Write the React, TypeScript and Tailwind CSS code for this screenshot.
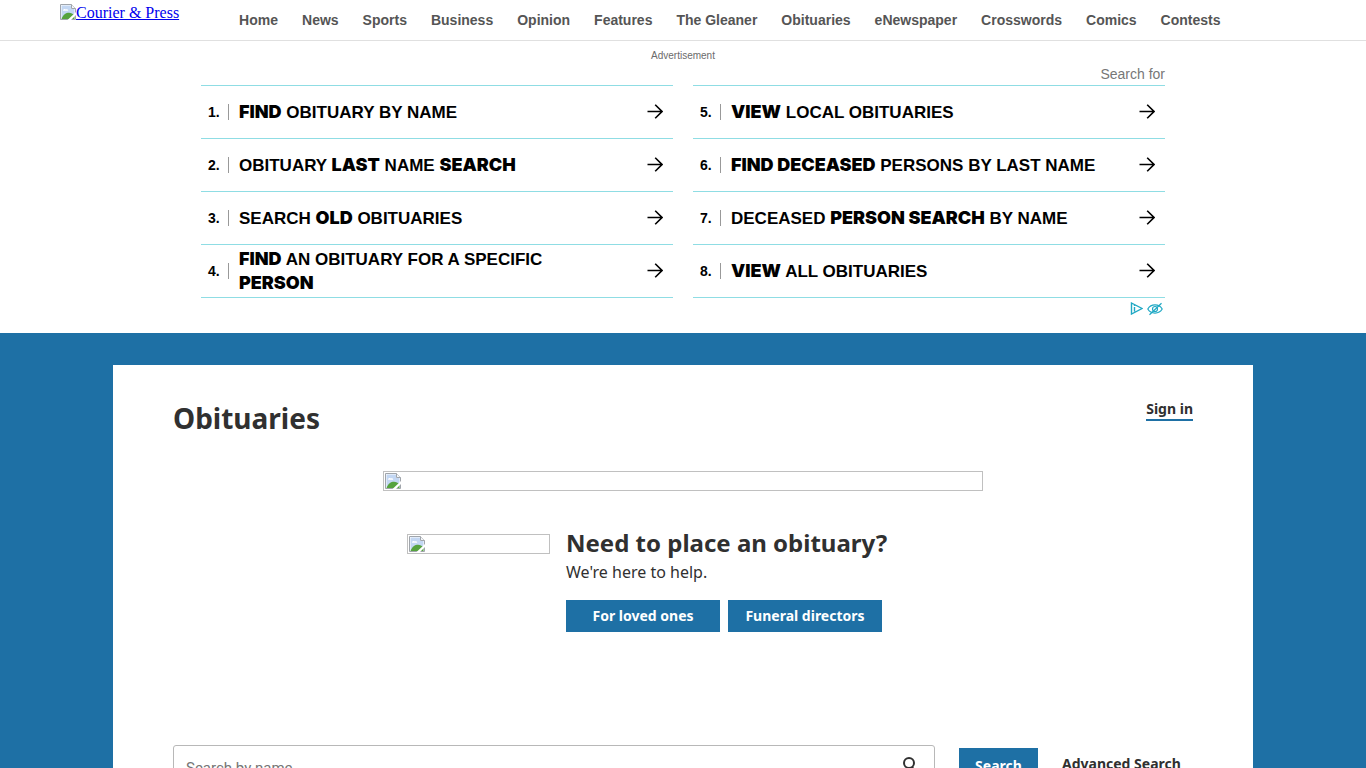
import type { ReactNode } from "react";

const navLinks = [
  "Home",
  "News",
  "Sports",
  "Business",
  "Opinion",
  "Features",
  "The Gleaner",
  "Obituaries",
  "eNewspaper",
  "Crosswords",
  "Comics",
  "Contests",
];

// Words wrapped in asterisks are set in the heavy face.
const adColumns = [
  [
    "*FIND* OBITUARY BY NAME",
    "OBITUARY *LAST* NAME *SEARCH*",
    "SEARCH *OLD* OBITUARIES",
    "*FIND* AN OBITUARY FOR A SPECIFIC *PERSON*",
  ],
  [
    "*VIEW* LOCAL OBITUARIES",
    "*FIND DECEASED* PERSONS BY LAST NAME",
    "DECEASED *PERSON SEARCH* BY NAME",
    "*VIEW* ALL OBITUARIES",
  ],
];

function BrokenImageIcon() {
  return (
    <svg width="16" height="16" viewBox="0 0 16 16" className="shrink-0" aria-hidden="true">
      <path d="M0.5 0.5H11.5L15.5 4.5V15.5H0.5Z" fill="#fff" stroke="#a0a5ab" />
      <path d="M1.5 1.5H11V5H14.5V14.5H1.5Z" fill="#c3d7f3" />
      <path d="M3 6.5C3 5 5 4.6 5.6 5.4C7 4.8 8.4 5.4 8.2 6.8H3Z" fill="#fff" />
      <path d="M1.5 15C3 10.6 6 8.8 9 8.8C11 8.8 13 10 14.5 11V15Z" fill="#56a33e" />
      <path d="M11.5 0.5V4.5H15.5" fill="#f4f6f8" stroke="#a0a5ab" />
      <path d="M7.5 16L16 8V11L11 16Z" fill="#fff" />
    </svg>
  );
}

function ArrowIcon() {
  return (
    <svg
      width="16"
      height="16"
      viewBox="0 0 16 16"
      fill="none"
      stroke="#000"
      strokeWidth="1.6"
      className="shrink-0"
      aria-hidden="true"
    >
      <path d="M0.5 7.5H15M8.2 0.7L15 7.5L8.2 14.3" />
    </svg>
  );
}

function AdText({ text }: { text: string }) {
  const parts: ReactNode[] = text.split("*").map((part, i) =>
    i % 2 === 1 ? (
      <b key={i} className="font-['Inter'] text-[18px] leading-none font-black">
        {part}
      </b>
    ) : (
      part
    ),
  );
  return <span className="w-[376px] pt-0.5 text-[17px] leading-6 font-bold">{parts}</span>;
}

function Header() {
  return (
    <header className="flex h-[41px] items-start border-b border-[#e0e0e0] px-[60px]">
      <a
        href="#"
        className="mt-1 flex items-start font-['Liberation_Serif',serif] text-base leading-[18px] text-[#0000ee] underline"
      >
        <BrokenImageIcon />
        Courier &amp; Press
      </a>
      <nav className="ml-[60px] flex h-10 items-center gap-6 text-sm font-bold whitespace-nowrap text-[#555]">
        {navLinks.map((link) => (
          <a key={link} href="#">
            {link}
          </a>
        ))}
      </nav>
    </header>
  );
}

function Advertisement() {
  return (
    <section className="mx-auto w-full max-w-[964px] pt-[7px] pb-[15px]">
      <p className="text-center text-[10px] leading-4 text-[#6b6b6b]">Advertisement</p>
      <p className="pb-px text-right text-sm leading-5 text-[#777]">Search for</p>
      <div className="grid grid-cols-2 gap-x-5">
        {adColumns.map((column, c) => (
          <ol key={c} className="border-t border-[#8fdde4]">
            {column.map((text, i) => (
              <li key={text} className="border-b border-[#8fdde4]">
                <a href="#" className="flex h-[52px] items-center pr-[10px] pl-[7px] text-black">
                  <span className="w-5 text-[14px] font-bold">{c * 4 + i + 1}.</span>
                  <span className="mr-[10px] h-4 w-px bg-[#999]" />
                  <AdText text={text} />
                  <span className="grow" />
                  <ArrowIcon />
                </a>
              </li>
            ))}
          </ol>
        ))}
      </div>
      <div className="flex h-5 items-center justify-end gap-1 pr-0.5 pt-px">
        <svg width="13" height="13" viewBox="0 0 13 13" fill="none" stroke="#1fa8c4" strokeWidth="1.4">
          <path d="M1.5 1L12 6.5L1.5 12ZM4.5 5V9.6M4.5 3.2V4" />
        </svg>
        <svg width="16" height="14" viewBox="0 0 16 14" fill="none" stroke="#1fa8c4" strokeWidth="1.2">
          <path d="M0.8 7C4 1.6 12 1.6 15.2 7C12 12.4 4 12.4 0.8 7Z" />
          <circle cx="8" cy="7" r="2.5" />
          <path d="M2.5 12.8L14.5 1.2" />
        </svg>
      </div>
    </section>
  );
}

function PlaceObituary() {
  return (
    <div className="mx-auto mt-[34px] w-full max-w-[600px]">
      <div className="flex h-5 items-center border border-[#c0c0c0] px-px">
        <BrokenImageIcon />
      </div>
      <div className="mt-9 flex gap-4 px-6">
        <div className="mt-[7px] flex h-5 w-[143px] items-center border border-[#c0c0c0] px-px">
          <BrokenImageIcon />
        </div>
        <div>
          <h2 className="text-2xl leading-8 font-bold whitespace-nowrap">Need to place an obituary?</h2>
          <p className="text-base leading-[26px]">We're here to help.</p>
          <div className="mt-[15px] flex gap-2 text-sm font-bold text-white">
            <button type="button" className="h-8 w-[154px] bg-[#1e70a5]">
              For loved ones
            </button>
            <button type="button" className="h-8 w-[154px] bg-[#1e70a5]">
              Funeral directors
            </button>
          </div>
        </div>
      </div>
    </div>
  );
}

function SearchBar() {
  return (
    <form className="mt-[113px] flex items-start gap-6">
      <label className="flex h-[46px] w-[762px] items-center rounded-[3px] border border-[#b8b8b8] pr-[17px] pl-3">
        <input
          type="text"
          aria-label="Search by name"
          placeholder="Search by name"
          className="min-w-0 grow font-['Roboto'] text-[15px] outline-none placeholder:text-[#757575]"
        />
        <svg width="16" height="22" viewBox="0 0 16 22" fill="none" stroke="#303030" strokeWidth="2">
          <circle cx="8" cy="6" r="5" />
          <path d="M11 10L15 15" />
        </svg>
      </label>
      <button type="submit" className="mt-[3px] h-9 w-[79px] bg-[#1e70a5] text-sm font-bold text-white">
        Search
      </button>
      <a href="#" className="mt-[9px] text-sm leading-5 font-bold whitespace-nowrap">
        Advanced Search
      </a>
    </form>
  );
}

export default function App() {
  return (
    <div className="min-h-screen bg-white font-['Liberation_Sans',Arial,sans-serif]">
      <Header />
      <Advertisement />
      <main className="bg-[#1e70a5] pt-8">
        <div className="mx-auto w-full max-w-[1140px] bg-white px-[60px] pt-[34px] pb-10 font-['Noto_Sans',sans-serif] text-[#303030]">
          <div className="flex items-start justify-between">
            <h1 className="text-[28px] leading-[38px] font-bold">Obituaries</h1>
            <a href="#" className="border-b-2 border-[#1e70a5] text-sm leading-5 font-bold">
              Sign in
            </a>
          </div>
          <PlaceObituary />
          <SearchBar />
        </div>
      </main>
    </div>
  );
}
